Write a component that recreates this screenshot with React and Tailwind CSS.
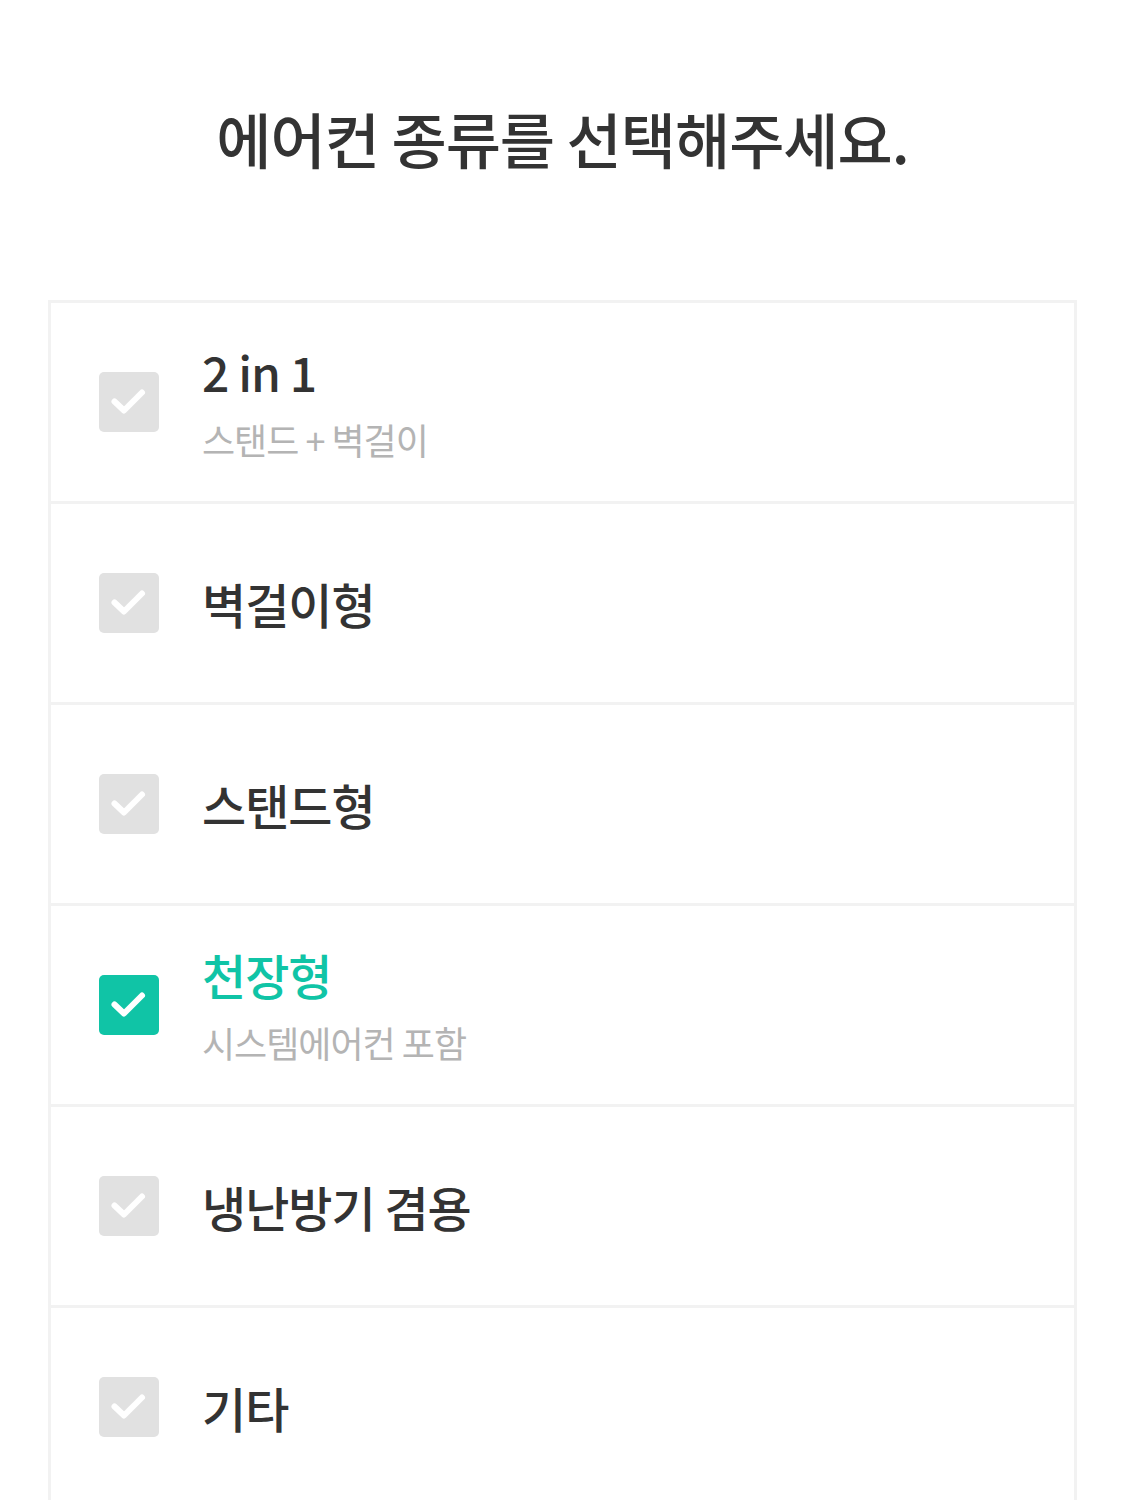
import { useState } from 'react';

const OPTIONS = [
  { id: '2in1', title: '2 in 1', sub: '스탠드 + 벽걸이' },
  { id: 'wall', title: '벽걸이형' },
  { id: 'stand', title: '스탠드형' },
  { id: 'ceiling', title: '천장형', sub: '시스템에어컨 포함' },
  { id: 'combo', title: '냉난방기 겸용' },
  { id: 'etc', title: '기타' },
];

const CheckBox = ({ checked }) => (
  <div
    className={`w-[60px] h-[60px] rounded-[5px] shrink-0 ${
      checked ? 'bg-[#10c4a6]' : 'bg-[#e1e1e1]'
    }`}
  >
    <svg width="60" height="60" viewBox="0 0 60 60" fill="none">
      <path d="M15.5 29.5l9.5 9 18-18" stroke="white" strokeWidth="6" strokeLinecap="round" strokeLinejoin="round" />
    </svg>
  </div>
);

const App = () => {
  const [selected, setSelected] = useState('ceiling');

  return (
    <div className="min-h-[1500px] bg-white" style={{ fontFamily: '"Noto Sans CJK KR", "Noto Sans", sans-serif' }}>
      <h1 className="pt-[98px] h-[300px] text-center text-[60px] leading-[80px] font-medium text-[#333333] tracking-[-1px]">
        에어컨 종류를 선택해주세요.
      </h1>

      <div className="mx-12 border-[3px] border-[#f2f2f2] border-b-0">
        {OPTIONS.map((opt) => {
          const checked = selected === opt.id;
          return (
            <div
              key={opt.id}
              onClick={() => setSelected(opt.id)}
              className="h-[201px] border-b-[3px] border-[#f2f2f2] flex items-center pl-[48px] cursor-pointer"
            >
              <CheckBox checked={checked} />
              <div className="ml-[43px] flex flex-col">
                <span
                  className={`text-[48px] leading-[60px] font-medium tracking-[-1px] ${
                    checked ? 'text-[#10c4a6]' : 'text-[#333333]'
                  }`}
                >
                  {opt.title}
                </span>
                {opt.sub && (
                  <span className="mt-[14px] text-[36px] leading-[48px] text-[#b4b4b4] tracking-[-1px]">
                    {opt.sub}
                  </span>
                )}
              </div>
            </div>
          );
        })}
      </div>
    </div>
  );
};

export default App;
